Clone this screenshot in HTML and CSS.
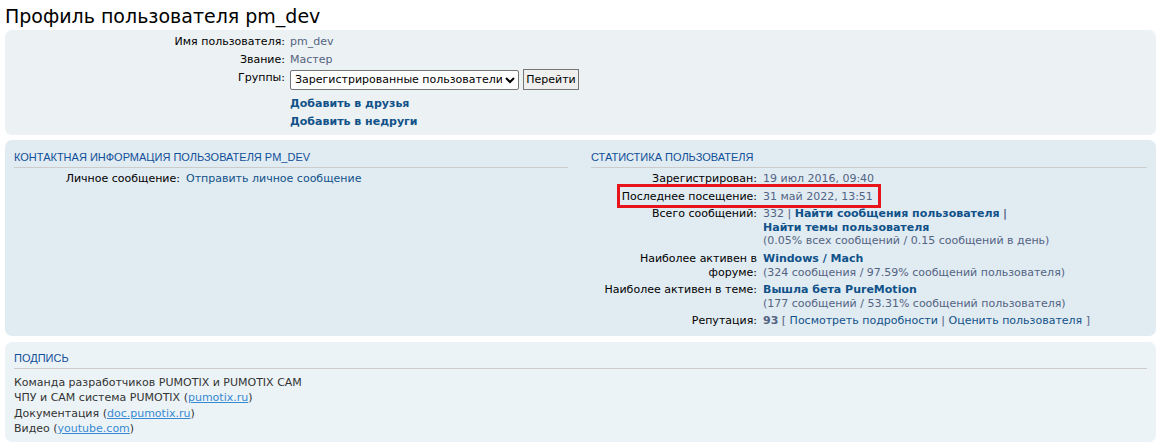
FILE: index.html
```html
<!DOCTYPE html>
<html lang="ru">
<head>
    <meta charset="UTF-8">
    <meta name="viewport" content="width=device-width, initial-scale=1.0">
    <title>Профиль пользователя pm_dev</title>
    <link rel="stylesheet" href="styles.css">
</head>
<body>
    <h2 class="title">Профиль пользователя pm_dev</h2>

    <div class="panel bg1">
        <dl class="details top">
            <dt>Имя пользователя:</dt>
            <dd class="muted">pm_dev</dd>
            <dt>Звание:</dt>
            <dd class="muted">Мастер</dd>
            <dt class="mid">Группы:</dt>
            <dd class="mid">
                <select class="groups">
                    <option>Зарегистрированные пользователи</option>
                </select>
                <button class="go">Перейти</button>
            </dd>
            <dt></dt>
            <dd class="links">
                <a href="#" class="strong">Добавить в друзья</a>
                <a href="#" class="strong">Добавить в недруги</a>
            </dd>
        </dl>
    </div>

    <div class="panel bg2">
        <div class="columns">
            <div class="column">
                <h3>Контактная информация пользователя pm_dev</h3>
                <dl class="details">
                    <dt>Личное сообщение:</dt>
                    <dd><a href="#">Отправить личное сообщение</a></dd>
                </dl>
            </div>
            <div class="column">
                <h3>Статистика пользователя</h3>
                <dl class="details stats">
                    <dt>Зарегистрирован:</dt>
                    <dd class="muted">19 июл 2016, 09:40</dd>
                    <dt class="marked">Последнее посещение:<span class="mark"></span></dt>
                    <dd class="muted">31 май 2022, 13:51</dd>
                    <dt>Всего сообщений:</dt>
                    <dd><span class="muted">332 |</span> <a href="#" class="strong">Найти сообщения пользователя</a> <span class="muted strong">|</span><br>
                        <a href="#" class="strong">Найти темы пользователя</a><br>
                        <span class="muted">(0.05% всех сообщений / 0.15 сообщений в день)</span></dd>
                    <dt>Наиболее активен в форуме:</dt>
                    <dd><a href="#" class="strong">Windows / Mach</a><br>
                        <span class="muted">(324 сообщения / 97.59% сообщений пользователя)</span></dd>
                    <dt>Наиболее активен в теме:</dt>
                    <dd><a href="#" class="strong">Вышла бета PureMotion</a><br>
                        <span class="muted">(177 сообщений / 53.31% сообщений пользователя)</span></dd>
                    <dt>Репутация:</dt>
                    <dd><span class="rep">93</span> <span class="muted">[</span> <a href="#">Посмотреть подробности</a> <span class="muted">|</span> <a href="#">Оценить пользователя</a> <span class="muted">]</span></dd>
                </dl>
            </div>
        </div>
    </div>

    <div class="panel bg3">
        <h3>Подпись</h3>
        <div class="signature">
            Команда разработчиков PUMOTIX и PUMOTIX CAM<br>
            ЧПУ и CAM система PUMOTIX (<a href="#" class="postlink">pumotix.ru</a>)<br>
            Документация (<a href="#" class="postlink">doc.pumotix.ru</a>)<br>
            Видео (<a href="#" class="postlink">youtube.com</a>)
        </div>
    </div>
</body>
</html>
```

FILE: styles.css
```css
*{
    padding: 0;
    margin: 0;
    box-sizing: border-box;
}
body{
    background-color: #ffffff;
    color: #333333;
    font-family: "DejaVu Sans", Verdana, sans-serif;
    font-size: 11px;
    padding: 0 5px;
}
a{
    color: #105289;
    text-decoration: none;
}
.title{
    font-family: "DejaVu Sans", sans-serif;
    font-weight: normal;
    font-size: 19px;
    color: #000000;
    line-height: 26px;
    margin-top: 3px;
    margin-bottom: 1px;
}
.panel{
    border-radius: 7px;
    padding: 9px 9px 8px 9px;
    margin-bottom: 5px;
}
.bg1{
    background-color: #ecf1f3;
    padding: 3px 10px 4px 10px;
}
.bg2{
    background-color: #e1ebf2;
    margin-bottom: 6px;
}
.bg3{
    background-color: #ecf3f7;
    padding-top: 8px;
    padding-bottom: 6px;
}
h3{
    font-family: "Liberation Sans", Arial, sans-serif;
    font-weight: normal;
    font-size: 11px;
    text-transform: uppercase;
    color: #115098;
    line-height: 16px;
    padding-bottom: 2px;
    border-bottom: 1px solid #cccccc;
}
.details{
    display: grid;
    grid-template-columns: 166px 1fr;
    column-gap: 6px;
    row-gap: 4.2px;
    line-height: 13.5px;
    margin-top: 4px;
}
.details dt{
    text-align: right;
    color: #000000;
}
.details.top{
    grid-template-columns: 270px 1fr;
    column-gap: 5px;
    row-gap: 0;
    line-height: 18px;
    margin-top: 0;
}
.details .mid{
    line-height: 22px;
    display: flex;
    align-items: center;
}
.details dt.mid{
    justify-content: flex-end;
    align-items: flex-start;
    line-height: 18px;
}
.links{
    display: flex;
    flex-direction: column;
    margin-top: 5px;
}
.muted{
    color: #536482;
}
.strong{
    font-weight: bold;
}
.rep{
    color: #536482;
    font-weight: bold;
}
.groups{
    font-family: "DejaVu Sans", Verdana, sans-serif;
    font-size: 11px;
    width: 229px;
    height: 20px;
    border: 1px solid #767676;
    border-radius: 2px;
    background-color: #ffffff;
    color: #000000;
}
.go{
    font-family: "DejaVu Sans", Verdana, sans-serif;
    font-size: 11px;
    height: 21px;
    width: 56px;
    margin-left: 4px;
    border: 1px solid #767676;
    background-color: #efefef;
    color: #000000;
}
.columns{
    display: grid;
    grid-template-columns: 554px 1fr;
    column-gap: 23px;
}
.marked{
    position: relative;
}
.mark{
    position: absolute;
    left: 26px;
    top: -6px;
    width: 264px;
    height: 24px;
    border: 3px solid #e8141b;
}
.signature{
    margin-top: 6px;
    line-height: 15.3px;
    color: #333333;
}
.postlink{
    color: #368ad2;
    text-decoration: underline;
}
```
